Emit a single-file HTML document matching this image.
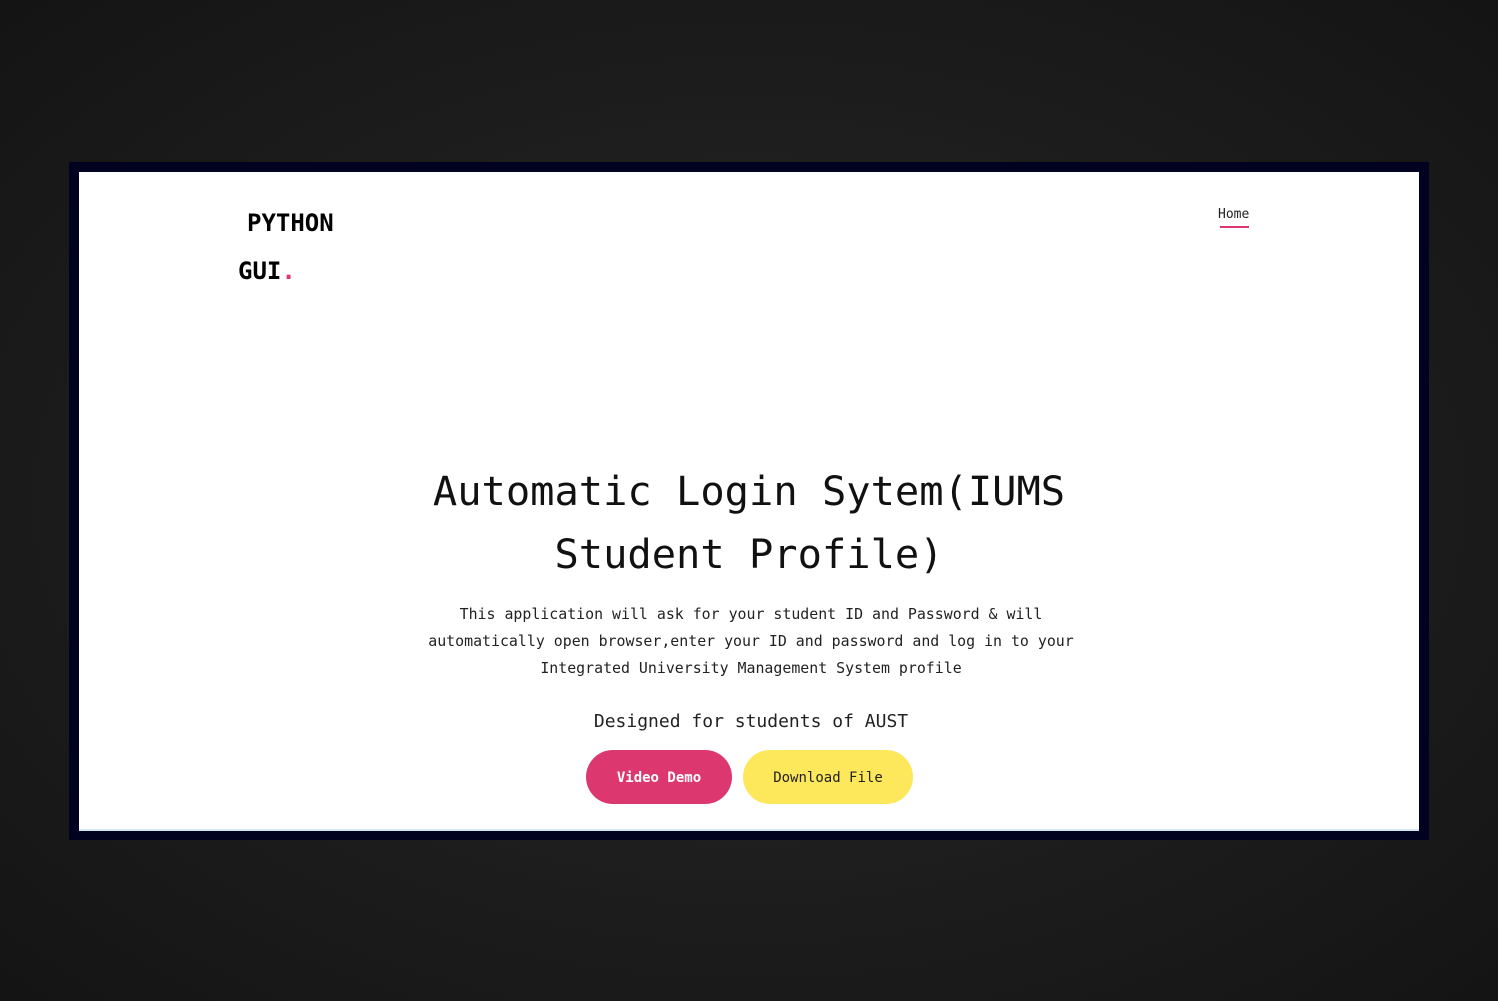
<!DOCTYPE html>
<html><head><meta charset="utf-8"><style>
html,body{margin:0;padding:0}
body{width:1498px;height:1001px;background:radial-gradient(ellipse at center,#2a2a2a 0%,#1c1c1c 60%,#141414 100%);position:relative;overflow:hidden;font-family:"DejaVu Sans Mono","Liberation Mono",monospace;color:#111}
.frame{position:absolute;left:69px;top:162px;width:1360px;height:678px;background:#00021f}
.inner{position:absolute;left:10px;top:10px;width:1340px;height:657px;background:#fff;border-bottom:2px solid #d6e6ee}
.logo{position:absolute;font-weight:bold;font-size:24px;color:#000}
.home{position:absolute;left:1139px;top:35px;font-size:13px;color:#222}
.home:after{content:"";position:absolute;left:2px;right:0;top:19px;height:2px;background:#dd3770}
.t{position:absolute;left:0;width:1340px;text-align:center}
h1{margin:0;font-weight:normal;font-size:40.4px;line-height:63px}
.p{font-size:14.9px;line-height:27px;color:#222}
.btn{position:absolute;top:578px;height:54px;border-radius:27px;font-size:14px;line-height:56px;text-align:center}
</style></head><body>
<div class="frame"><div class="inner">
<div class="logo" style="left:168px;top:37px">PYTHON</div>
<div class="logo" style="left:159px;top:85px">GUI<span style="color:#dd3770">.</span></div>
<div class="home">Home</div>
<div class="t" style="top:288px"><h1>Automatic Login Sytem(IUMS<br>Student Profile)</h1></div>
<div class="t p" style="top:429px;left:2px">This application will ask for your student ID and Password &amp; will<br>automatically open browser,enter your ID and password and log in to your<br>Integrated University Management System profile</div>
<div class="t" style="top:537px;left:2px;font-size:18px;line-height:26px;color:#222">Designed for students of AUST</div>
<div class="btn" style="left:507px;width:146px;background:#dd3770;color:#fff;font-weight:bold">Video Demo</div>
<div class="btn" style="left:664px;width:170px;background:#fde75a;color:#222">Download File</div>
</div></div>
</body></html>
